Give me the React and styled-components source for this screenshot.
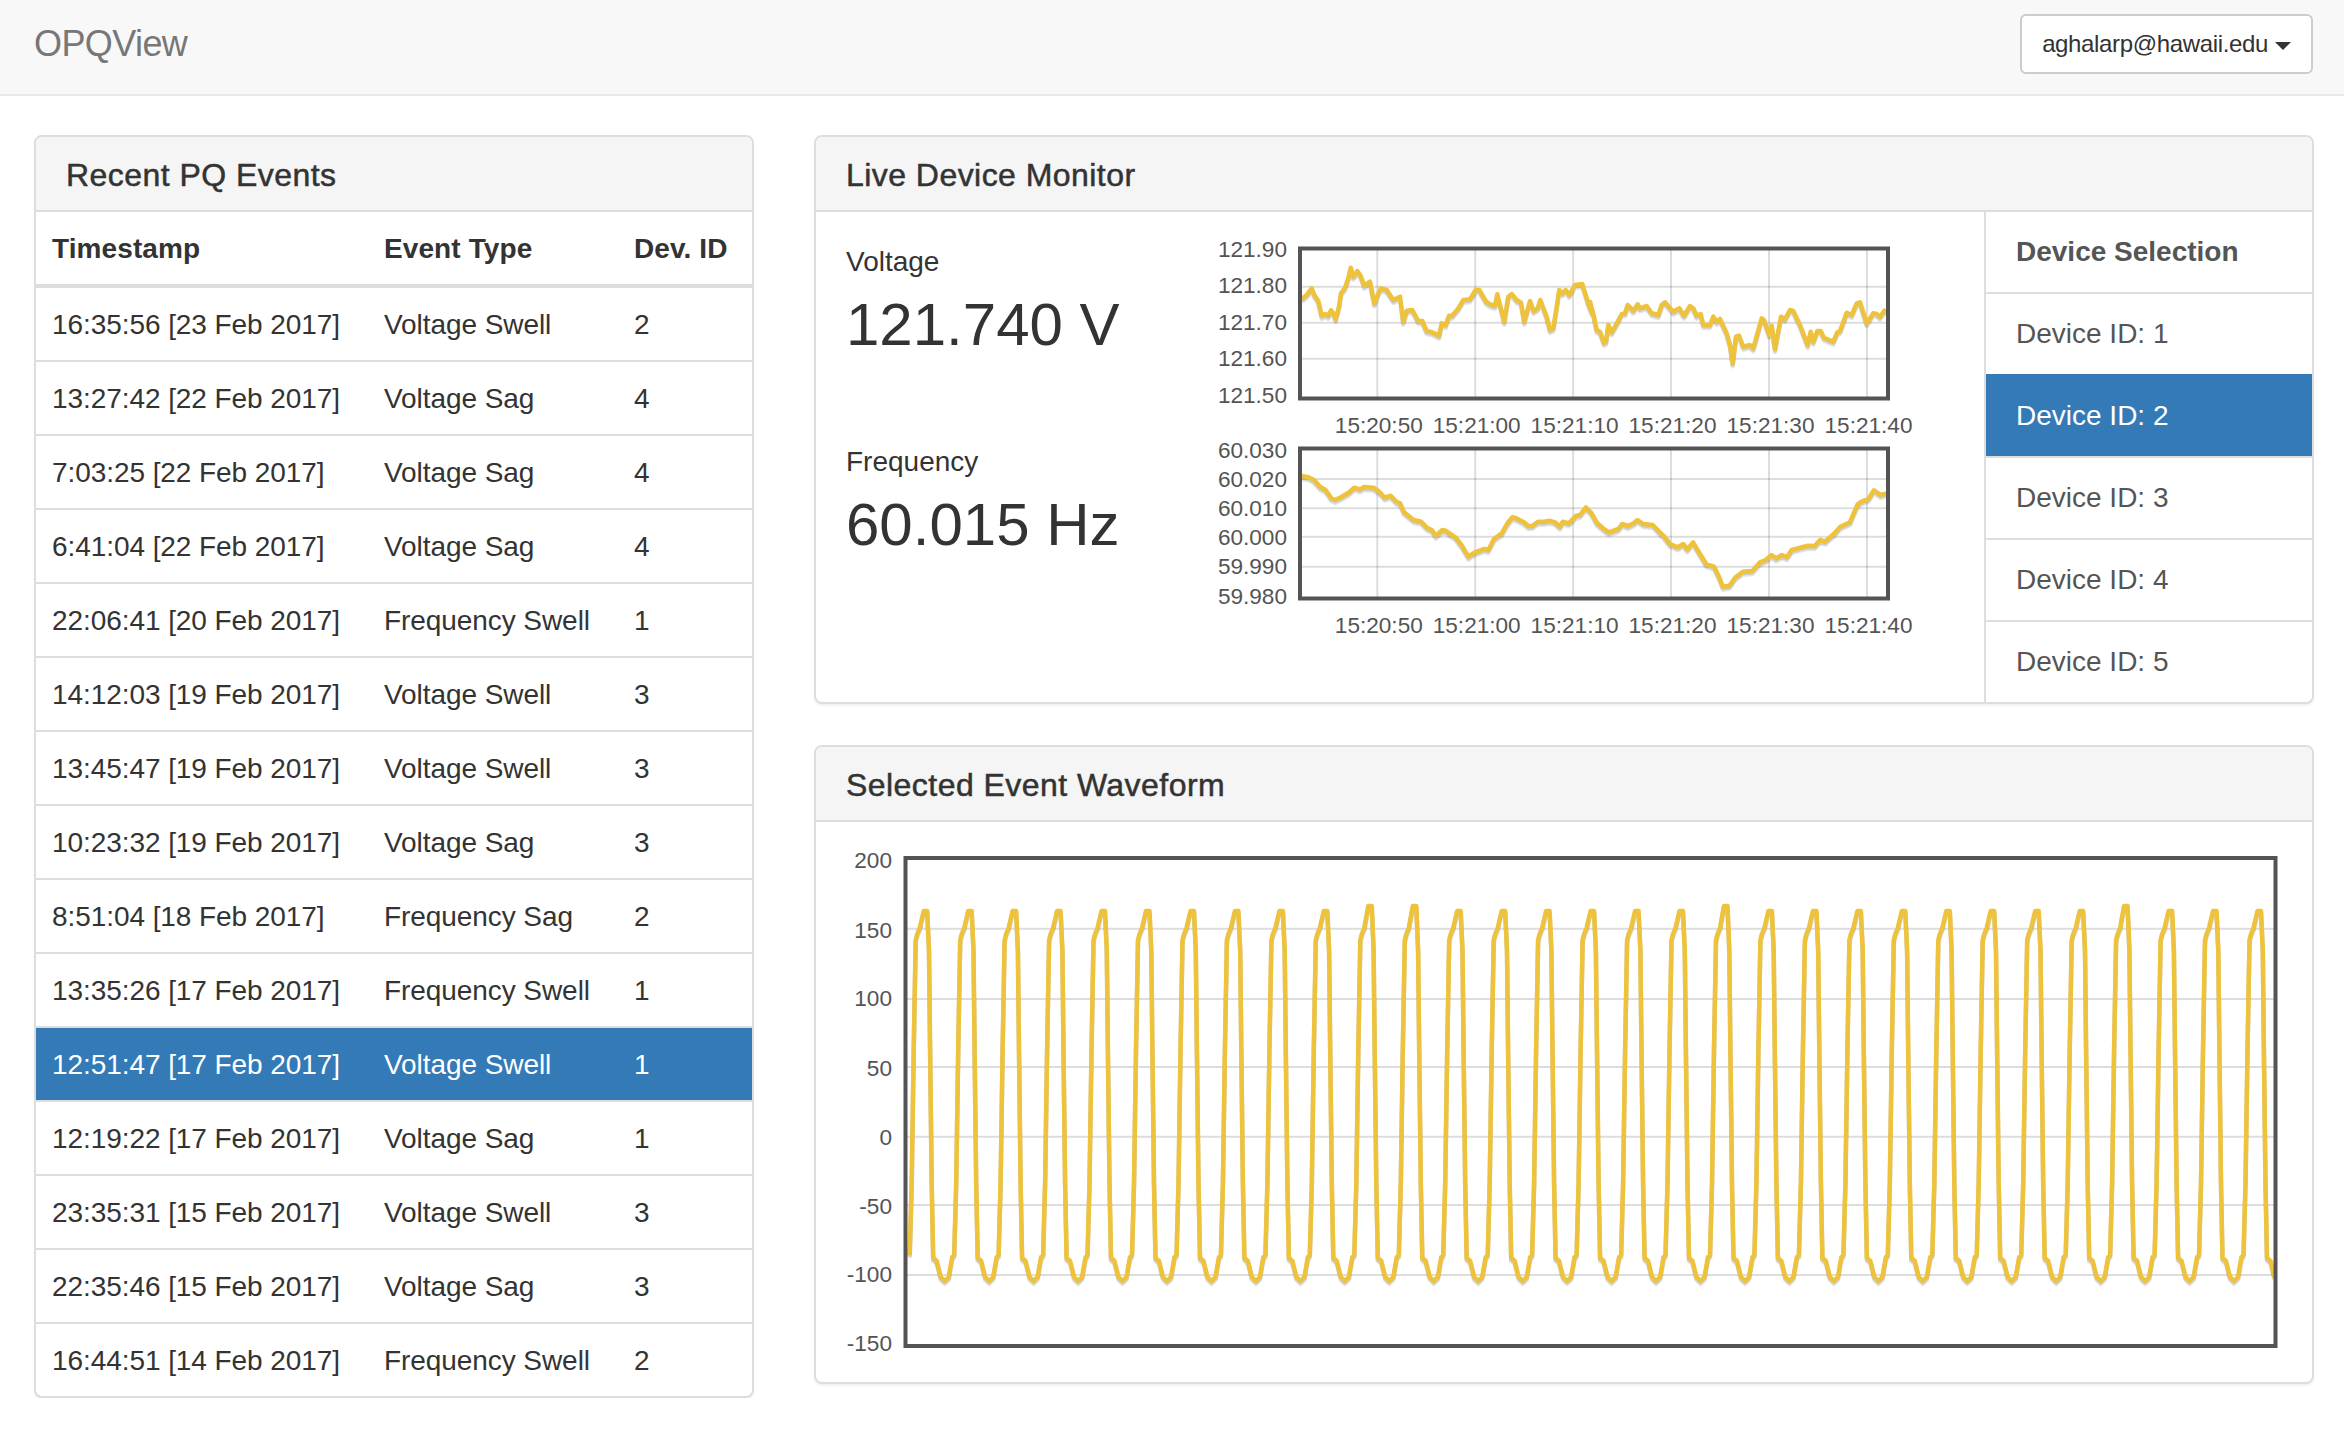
import React from 'react';
import styled, { createGlobalStyle } from 'styled-components';

const events = [
  ['16:35:56 [23 Feb 2017]', 'Voltage Swell', 2],
  ['13:27:42 [22 Feb 2017]', 'Voltage Sag', 4],
  ['7:03:25 [22 Feb 2017]', 'Voltage Sag', 4],
  ['6:41:04 [22 Feb 2017]', 'Voltage Sag', 4],
  ['22:06:41 [20 Feb 2017]', 'Frequency Swell', 1],
  ['14:12:03 [19 Feb 2017]', 'Voltage Swell', 3],
  ['13:45:47 [19 Feb 2017]', 'Voltage Swell', 3],
  ['10:23:32 [19 Feb 2017]', 'Voltage Sag', 3],
  ['8:51:04 [18 Feb 2017]', 'Frequency Sag', 2],
  ['13:35:26 [17 Feb 2017]', 'Frequency Swell', 1],
  ['12:51:47 [17 Feb 2017]', 'Voltage Swell', 1],
  ['12:19:22 [17 Feb 2017]', 'Voltage Sag', 1],
  ['23:35:31 [15 Feb 2017]', 'Voltage Swell', 3],
  ['22:35:46 [15 Feb 2017]', 'Voltage Sag', 3],
  ['16:44:51 [14 Feb 2017]', 'Frequency Swell', 2],
];
const selectedEvent = 10;
const devices = [1, 2, 3, 4, 5];
const selectedDevice = 2;

// traced samples, chart svgs use page pixels as their viewBox
const trace = (str, ox, oy, sx, sy) =>
  str.trim().split(/\s+/).map((p) => {
    const [x, y] = p.split(',').map(Number);
    return `${(ox + x / sx).toFixed(1)},${(oy + y / sy).toFixed(1)}`;
  }).join(' ');

const voltagePoints = [
  trace(`20,162 35,150 50,130 58,150 70,168 80,212 90,207 100,212 108,196 115,205 122,222 132,185 138,145 150,128
    160,100 167,68 175,95 180,90 187,78 197,93 208,122 225,110 238,175 250,145 258,130 275,135 295,165 315,155
    325,230 335,197 352,195 370,228 382,228 395,258 412,262 432,272 440,235 452,240 462,212 472,212 490,190 505,165
    525,163 542,135 553,135 575,172 590,180 600,182 607,148 628,230 640,155 650,147 665,165 678,173 688,230 705,168
    716,198 728,190 736,165 755,215 765,255 775,250 793,135 802,145 812,135 823,150 840,120 862,117 880,175 892,205`, 1295, 245, 3, 3),
  trace(`0,170 12,215 20,255 30,260 42,293 48,290 55,240 65,262 75,245 95,207 105,205 113,180 130,197 143,178 150,190
    170,183 185,205 205,210 215,180 225,172 250,200 268,190 282,212 300,183 310,190 320,212 332,207 340,240 360,240
    370,215 380,230 390,222 410,265 420,300 428,355 438,275 447,272 460,305 480,300 490,310 515,220 522,225 538,270
    545,242 555,312 573,215 585,222 600,195 610,198 630,240 653,300 662,260 670,290 682,258 692,258 702,278 730,290
    742,262 750,258 770,203 785,210 800,175 810,172 830,235 850,205 860,207 870,215 887,192`, 1590, 245, 3, 3),
].join(' ');

const frequencyPoints = trace(`18,93 35,97 50,105 65,125 80,135 95,160 105,165 120,157 140,143 155,128 170,133 180,126
  205,128 220,140 235,158 250,152 265,170 275,175 285,202 310,225 330,230 345,248 358,256 368,272 385,255 395,258
  420,278 435,300 453,335 470,322 495,312 505,315 520,282 540,265 555,235 568,217 578,220 598,232 610,243 620,243
  635,230 650,230 665,227 680,232 692,245 700,230 715,235 735,212 745,210 760,187 775,205 790,235 805,250 820,262
  845,252 855,237 870,243 885,235 895,225 910,237 935,240 950,258 965,275 980,297 1000,307 1015,297 1025,313 1040,292
  1060,330 1075,358 1095,365 1108,395 1118,425 1135,422 1150,398 1170,380 1195,378 1215,352 1230,345 1245,330 1258,340
  1272,330 1285,337 1298,315 1320,308 1340,302 1358,303 1372,285 1385,290 1410,265 1425,245 1450,232 1470,178 1480,170
  1498,162 1513,136 1530,150 1545,145`, 1295, 445, 2.613, 3);

// one cycle of the waveform, x relative to the peak
const cycle = [
  [-16, 1255], [-14, 1183], [-12, 1050], [-10, 940], [-8.5, 934], [-6, 928], [-2, 911], [1.5, 911], [3.3, 950],
  [4.4, 1050], [6, 1183], [7.5, 1258], [11, 1261], [15, 1277], [19, 1281], [23, 1277], [26.5, 1257],
];
const taller = { 10: 5, 11: 5, 18: 5, 27: 5 };

const waveformPoints = Array.from({ length: 31 }, (_, k) => {
  const peak = 926.7 + k * 44.46;
  return cycle
    .filter(([dx]) => k < 30 || dx <= 15)
    .map(([dx, y]) => {
      const top = y < 915 ? y - (taller[k] || 0) : y;
      return `${(peak + dx).toFixed(1)},${top}`;
    })
    .join(' ');
}).join(' ');

const GlobalStyle = createGlobalStyle`
  html, body {
    margin: 0;
    padding: 0;
    background: #fff;
  }
  body {
    font-family: "Liberation Sans", Arial, sans-serif;
    font-size: 28px;
    line-height: 40px;
    color: #333;
  }
`;

const Navbar = styled.nav`
  display: flex;
  align-items: center;
  justify-content: space-between;
  height: 94px;
  padding: 0 31px 0 34px;
  background: #f8f8f8;
  border-bottom: 2px solid #e7e7e7;
`;

const Brand = styled.a`
  font-size: 36px;
  color: #777;
  letter-spacing: -0.6px;
  margin-top: -6px;
`;

const UserButton = styled.button`
  display: flex;
  align-items: center;
  gap: 7px;
  height: 60px;
  margin-top: -6px;
  padding: 0 20px;
  font-family: inherit;
  font-size: 24px;
  letter-spacing: -0.35px;
  color: #333;
  background: #fff;
  border: 2px solid #ccc;
  border-radius: 6px;
`;

const Caret = styled.span`
  width: 0;
  height: 0;
  margin-top: 3px;
  border-top: 8px solid #333;
  border-left: 8px solid transparent;
  border-right: 8px solid transparent;
`;

const Main = styled.main`
  display: grid;
  grid-template-columns: 720px 1fr;
  gap: 60px;
  align-items: start;
  padding: 39px 31px 0 34px;
`;

const RightColumn = styled.div`
  display: flex;
  flex-direction: column;
  gap: 41px;
`;

const Panel = styled.section`
  background: #fff;
  border: 2px solid #ddd;
  border-radius: 8px;
  box-shadow: 0 2px 2px rgba(0, 0, 0, 0.05);
  overflow: hidden;
`;

const PanelHeading = styled.header`
  padding: 21px 30px 17px;
  background: #f5f5f5;
  border-bottom: 2px solid #ddd;
`;

const PanelTitle = styled.h3`
  margin: 0;
  font-size: 32px;
  font-weight: 400;
  line-height: 35px;
  letter-spacing: 0.45px;
  color: #333;
  -webkit-text-stroke: 0.5px #333;
`;

const EventTable = styled.table`
  width: 100%;
  table-layout: fixed;
  border-collapse: separate;
  border-spacing: 0;
  letter-spacing: -0.07px;
`;

const HeadCell = styled.th`
  box-sizing: border-box;
  width: ${(p) => p.$width}px;
  padding: 17px 16px 15px;
  text-align: left;
  font-weight: 700;
  letter-spacing: 0.1px;
  border-bottom: 4px solid #ddd;
`;

const EventRow = styled.tr`
  background: ${(p) => (p.$active ? '#337ab7' : 'transparent')};
  color: ${(p) => (p.$active ? '#fff' : '#333')};
  &:not(:first-child) td {
    border-top: 2px solid #ddd;
  }
`;

const EventCell = styled.td`
  padding: 17px 16px 15px;
  white-space: nowrap;
`;

const MonitorBody = styled.div`
  display: flex;
  height: 490px;
`;

const Readings = styled.div`
  flex: 0 0 394px;
  box-sizing: border-box;
  padding: 30px 0 0 30px;
`;

const Reading = styled.div`
  height: 200px;
`;

const ReadingValue = styled.div`
  margin-top: 10px;
  font-size: 60px;
  line-height: 66px;
  color: #333;
`;

const ChartColumn = styled.div`
  padding-top: 23px;
`;

const ChartSvg = styled.svg`
  display: block;
`;

const AxisLabel = styled.text`
  font-size: 22.6px;
  fill: #545454;
  dominant-baseline: central;
`;

const GridLine = styled.line`
  stroke: rgba(84, 84, 84, 0.2);
  stroke-width: 2;
`;

const Frame = styled.rect`
  fill: none;
  stroke: #545454;
  stroke-width: 4;
`;

const Line = styled.polyline`
  fill: none;
  stroke: ${(p) => (p.$shadow ? 'rgba(0, 0, 0, 0.1)' : '#eec23a')};
  stroke-width: ${(p) => p.$width}px;
  stroke-linejoin: round;
`;

const DeviceList = styled.div`
  flex: 0 0 326px;
  margin-left: auto;
  border-left: 2px solid #ddd;
  display: flex;
  flex-direction: column;
`;

const DeviceTitle = styled.div`
  height: 80px;
  padding: 0 30px;
  display: flex;
  align-items: center;
  font-weight: 700;
  color: #555;
`;

const DeviceItem = styled.div`
  flex: 1;
  padding: 0 30px;
  display: flex;
  align-items: center;
  color: ${(p) => (p.$active ? '#fff' : '#555')};
  background: ${(p) => (p.$active ? '#337ab7' : '#fff')};
  border-top: 2px solid ${(p) => (p.$active ? '#337ab7' : '#ddd')};
`;

const WaveformBody = styled.div`
  padding: 24px 30px;
`;

function Trace({ points, width }) {
  return (
    <>
      <Line points={points} $shadow $width={width} transform="translate(0 3)" />
      <Line points={points} $shadow $width={width} transform="translate(0 1.5)" />
      <Line points={points} $width={width} />
    </>
  );
}

const timeTicks = [
  [1377.3, '15:20:50'],
  [1475.2, '15:21:00'],
  [1573.1, '15:21:10'],
  [1671, '15:21:20'],
  [1769, '15:21:30'],
  [1867, '15:21:40'],
];

function LiveChart({ originY, yTicks, gridY, points }) {
  const top = originY + 13.5;
  const bottom = originY + 163.5;
  return (
    <g>
      {gridY.map((y) => <GridLine key={y} x1="1300" x2="1888" y1={y} y2={y} />)}
      {timeTicks.map(([x]) => <GridLine key={x} x1={x} x2={x} y1={top} y2={bottom} />)}
      <Trace points={points} width={4.5} />
      <Frame x="1300" y={top} width="588" height="150" />
      {yTicks.map(([y, label]) => (
        <AxisLabel key={label} x="1287" y={y} textAnchor="end">{label}</AxisLabel>
      ))}
      {timeTicks.map(([x, label]) => (
        <AxisLabel key={label} x={x + 1.5} y={originY + 190} textAnchor="middle">{label}</AxisLabel>
      ))}
    </g>
  );
}

function WaveformChart() {
  const gridY = [928.7, 999, 1067, 1136.7, 1205, 1275];
  const yTicks = [
    [860, '200'], [930, '150'], [998, '100'], [1068, '50'],
    [1137, '0'], [1206, '-50'], [1274, '-100'], [1343, '-150'],
  ];
  return (
    <ChartSvg width="1436" height="512" viewBox="847 846 1436 512">
      {gridY.map((y) => <GridLine key={y} x1="906.5" x2="2276.5" y1={y} y2={y} />)}
      <Trace points={waveformPoints} width={4.5} />
      <Frame x="906.5" y="858" width="1370" height="488" />
      {yTicks.map(([y, label]) => (
        <AxisLabel key={label} x="893" y={y} textAnchor="end">{label}</AxisLabel>
      ))}
    </ChartSvg>
  );
}

export default function App() {
  return (
    <>
      <GlobalStyle />
      <Navbar>
        <Brand>OPQView</Brand>
        <UserButton>aghalarp@hawaii.edu<Caret /></UserButton>
      </Navbar>
      <Main>
        <Panel>
          <PanelHeading>
            <PanelTitle>Recent PQ Events</PanelTitle>
          </PanelHeading>
          <EventTable>
            <thead>
              <tr>
                <HeadCell $width={332}>Timestamp</HeadCell>
                <HeadCell $width={250}>Event Type</HeadCell>
                <HeadCell $width={134}>Dev. ID</HeadCell>
              </tr>
            </thead>
            <tbody>
              {events.map(([time, type, id], i) => (
                <EventRow key={time} $active={i === selectedEvent}>
                  <EventCell>{time}</EventCell>
                  <EventCell>{type}</EventCell>
                  <EventCell>{id}</EventCell>
                </EventRow>
              ))}
            </tbody>
          </EventTable>
        </Panel>
        <RightColumn>
          <Panel>
            <PanelHeading>
              <PanelTitle>Live Device Monitor</PanelTitle>
            </PanelHeading>
            <MonitorBody>
              <Readings>
                <Reading>
                  Voltage
                  <ReadingValue>121.740 V</ReadingValue>
                </Reading>
                <Reading>
                  Frequency
                  <ReadingValue>60.015 Hz</ReadingValue>
                </Reading>
              </Readings>
              <ChartColumn>
                <ChartSvg width="710" height="405" viewBox="1210 235 710 405">
                  <LiveChart
                    originY={235}
                    points={voltagePoints}
                    gridY={[286.7, 322.7, 358.7]}
                    yTicks={[[249, '121.90'], [285.5, '121.80'], [322, '121.70'], [358.5, '121.60'], [395.5, '121.50']]}
                  />
                  <LiveChart
                    originY={435}
                    points={frequencyPoints}
                    gridY={[479, 508.3, 536.7, 566.7]}
                    yTicks={[[450.7, '60.030'], [479.5, '60.020'], [508, '60.010'], [537, '60.000'], [566, '59.990'], [596, '59.980']]}
                  />
                </ChartSvg>
              </ChartColumn>
              <DeviceList>
                <DeviceTitle>Device Selection</DeviceTitle>
                {devices.map((d) => (
                  <DeviceItem key={d} $active={d === selectedDevice}>Device ID: {d}</DeviceItem>
                ))}
              </DeviceList>
            </MonitorBody>
          </Panel>
          <Panel>
            <PanelHeading>
              <PanelTitle>Selected Event Waveform</PanelTitle>
            </PanelHeading>
            <WaveformBody>
              <WaveformChart />
            </WaveformBody>
          </Panel>
        </RightColumn>
      </Main>
    </>
  );
}
